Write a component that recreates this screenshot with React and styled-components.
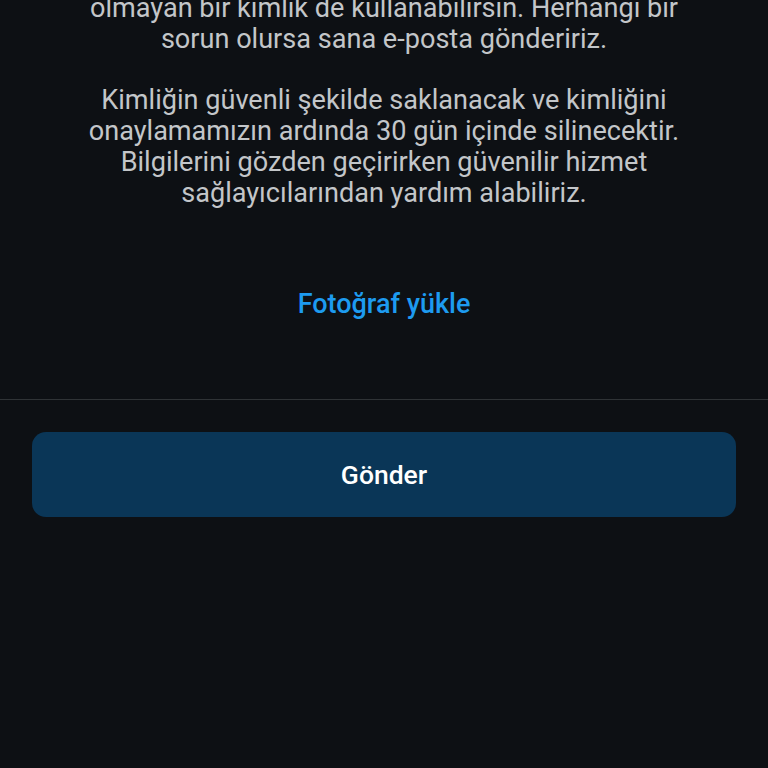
import React from "react";
import styled, { createGlobalStyle } from "styled-components";

const Global = createGlobalStyle`
  html, body { margin: 0; padding: 0; background: #0d1014; }
  body { font-family: Roboto, "Noto Sans", sans-serif; }
`;

const Page = styled.div`
  width: 768px;
  height: 768px;
  overflow: hidden;
  background: #0d1014;
  display: flex;
  flex-direction: column;
`;

const Body = styled.div`
  margin-top: -7px;
  display: flex;
  flex-direction: column;
  align-items: center;
  padding: 0 16px;
`;

const Paragraph = styled.p`
  margin: 0 0 ${(p) => p.$gap || 0}px;
  font-size: 27.1px;
  line-height: 31px;
  color: #c3c6c9;
  text-align: center;
  font-weight: 400;
  white-space: nowrap;
`;

const LinkButton = styled.button`
  margin-top: 80px;
  background: none;
  border: none;
  padding: 0;
  font-family: Roboto, sans-serif;
  font-size: 27px;
  line-height: 31px;
  font-weight: 500;
  color: #1d9bf0;
  cursor: pointer;
`;

const Divider = styled.hr`
  margin: 79px 0 0;
  border: none;
  height: 1px;
  background: #2f3336;
  width: 100%;
`;

const Footer = styled.div`
  padding: 32px 32px 0;
`;

const Submit = styled.button`
  width: 100%;
  height: 85px;
  border: none;
  border-radius: 14px;
  background: #0a3657;
  color: #ffffff;
  font-family: Roboto, sans-serif;
  font-size: 26.5px;
  font-weight: 500;
`;

export default function App() {
  return (
    <Page>
      <Global />
      <Body>
        <Paragraph $gap={30}>
          olmayan bir kimlik de kullanabilirsin. Herhangi bir
          <br />
          sorun olursa sana e-posta göndeririz.
        </Paragraph>
        <Paragraph>
          Kimliğin güvenli şekilde saklanacak ve kimliğini
          <br />
          onaylamamızın ardında 30 gün içinde silinecektir.
          <br />
          Bilgilerini gözden geçirirken güvenilir hizmet
          <br />
          sağlayıcılarından yardım alabiliriz.
        </Paragraph>
        <LinkButton>Fotoğraf yükle</LinkButton>
      </Body>
      <Divider />
      <Footer>
        <Submit>Gönder</Submit>
      </Footer>
    </Page>
  );
}
